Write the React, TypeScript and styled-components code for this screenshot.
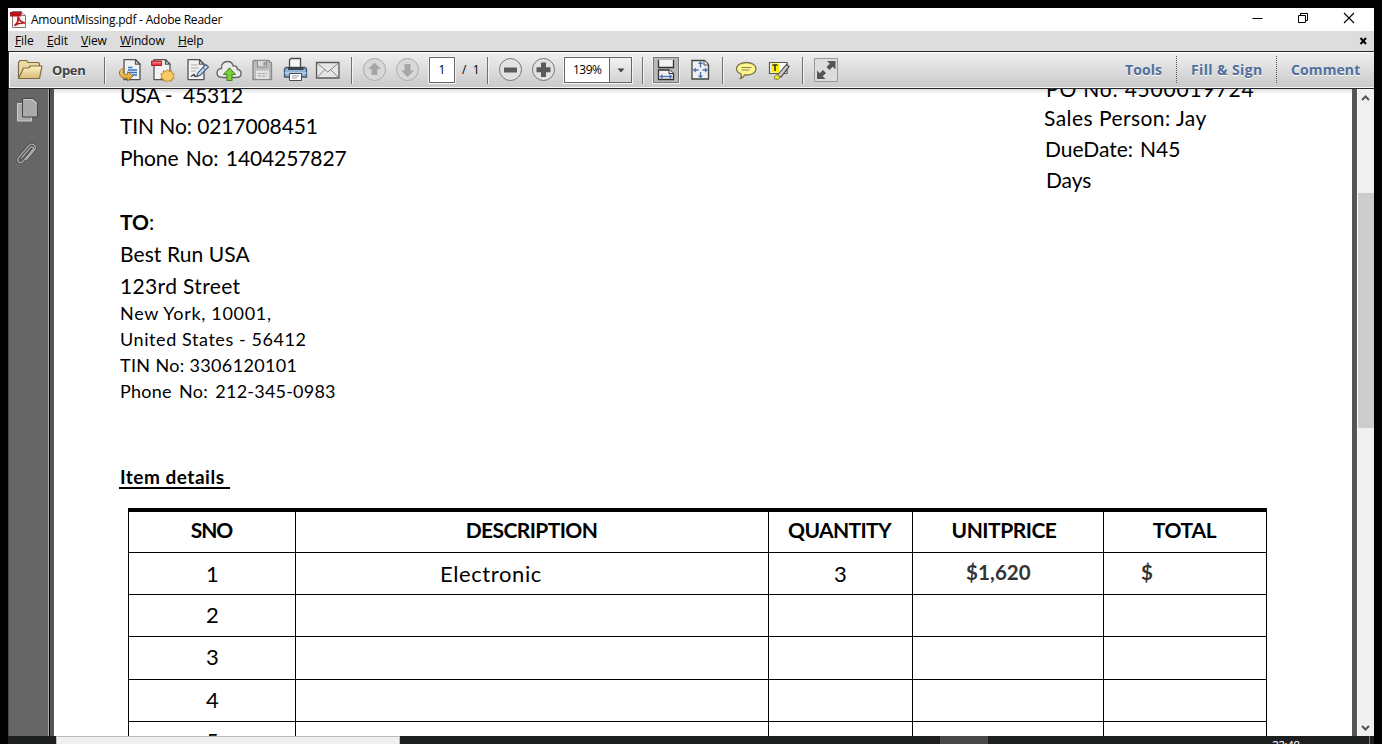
import React from "react";
import styled, { createGlobalStyle } from "styled-components";

const Global = createGlobalStyle`
  * { box-sizing: border-box; }
  html, body { margin: 0; background: #000; overflow: hidden; }
`;

const ui = `"Open Sans", "Noto Sans", sans-serif`;
const doc = `Lato, Carlito, sans-serif`;

const Screen = styled.div`
  width: 1382px;
  height: 744px;
  padding: 8px 8px 0;
  background: #000;
  display: flex;
  flex-direction: column;
  overflow: hidden;
  font-family: ${ui};
  font-size: 12px;
  color: #000;
`;

const TitleBar = styled.header`
  height: 23px;
  background: #fff;
  display: flex;
  align-items: center;
  padding: 0 19px 0 2px;
`;
const Title = styled.span`
  flex: 1;
  margin-left: 4px;
  letter-spacing: -0.22px;
  line-height: 23px;
  white-space: pre;
`;
const WindowButtons = styled.div`
  display: flex;
  gap: 34px;
  margin-bottom: 3px;
  svg { display: block; }
`;

const MenuBar = styled.nav`
  height: 20px;
  background: #dddddd;
  display: flex;
  align-items: center;
  padding: 0 6px 0 7px;
`;
const MenuItem = styled.span<{ $width: number }>`
  width: ${(p) => p.$width}px;
  line-height: 20px;
  letter-spacing: -0.12px;
`;
const CloseDoc = styled.svg`
  margin-left: auto;
`;

const Toolbar = styled.div`
  height: 38px;
  border: 1px solid #262626;
  border-right: 0;
  background: linear-gradient(#efefef, #c9c9c9);
  box-shadow: inset 1px 1px 0 #fff, inset 0 -1px 0 #f6f6f6;
  display: flex;
  align-items: flex-start;
  padding-top: 5px;
  flex: none;
`;
const Icon = styled.svg<{ $gap: number }>`
  display: block;
  flex: none;
  margin-left: ${(p) => p.$gap}px;
`;
const Separator = styled.i<{ $gap: number }>`
  flex: none;
  width: 2px;
  height: 27px;
  margin-left: ${(p) => p.$gap}px;
  border-left: 1px solid #6f6f6f;
  border-right: 1px solid #f3f3f3;
`;
const OpenLabel = styled.b`
  margin-left: 8px;
  width: 36px;
  font-size: 13px;
  letter-spacing: -0.35px;
  line-height: 27px;
  color: #444;
  text-shadow: 0 1px 0 #fff;
`;
const PageField = styled.div`
  width: 26px;
  height: 26px;
  margin-left: 9px;
  border: 1px solid #666;
  background: #fff;
  box-shadow: 0 0 0 1px #f4f4f4;
  text-align: center;
  line-height: 24px;
`;
const PageCount = styled.span`
  margin-left: 7px;
  width: 18px;
  line-height: 26px;
  white-space: pre;
`;
const ZoomField = styled.div`
  display: flex;
  width: 68px;
  height: 26px;
  margin-left: 9px;
  border: 1px solid #666;
  background: #fff;
  box-shadow: 0 0 0 1px #f4f4f4;
`;
const ZoomValue = styled.span`
  width: 45px;
  padding-left: 8px;
  line-height: 24px;
  letter-spacing: -0.5px;
  border-right: 1px solid #666;
`;
const ZoomArrow = styled.span`
  flex: 1;
  display: flex;
  align-items: center;
  justify-content: center;
  background: linear-gradient(#f2f2f2, #d4d4d4);
`;
const PressedButton = styled.div`
  width: 26px;
  height: 26px;
  margin-left: 9px;
  border: 1px solid #777;
  background: #b9b9b9;
  box-shadow: 0 0 0 1px #f0f0f0;
`;
const Panes = styled.div`
  display: flex;
  margin-left: auto;
  margin-top: -1px;
  height: 27px;
`;
const PaneButton = styled.b<{ $width: number; $spacing: number }>`
  width: ${(p) => p.$width}px;
  padding-left: 14px;
  border-left: 1px dotted #555;
  font-size: 14px;
  line-height: 27px;
  letter-spacing: ${(p) => p.$spacing}px;
  color: #4f6f9d;
  text-shadow: 0 1px 0 #fff;
  white-space: nowrap;
  &:first-child { border-left: 0; }
`;

const Body = styled.div`
  height: 647px;
  display: flex;
  background: #555;
`;
const SideBar = styled.aside`
  width: 40px;
  background: #666;
  border-left: 1px solid #4a4a4a;
  padding: 8px 0 0 7px;
`;
const PaneEdge = styled.div`
  width: 6px;
  background: linear-gradient(90deg, #aaa 0 1px, #000 1px 2px, #555 2px);
`;
const Page = styled.main`
  width: 1298px;
  height: 647px;
  padding: 0 0 0 66px;
  background: #fff;
  overflow: hidden;
  font-family: ${doc};
  position: relative;
`;
const PageShade = styled.div`
  position: absolute;
  inset: 0 0 auto 0;
  height: 5px;
  background: linear-gradient(rgba(0, 0, 0, 0.12), transparent);
`;
const Columns = styled.div`
  display: flex;
  height: 315px;
`;
const Addresses = styled.div`
  width: 924px;
  margin-top: -10px;
`;
const Order = styled.div`
  margin-top: -15px;
`;
const Line = styled.div<{ $spacing?: number; $words?: number; $height?: number; $indent?: number }>`
  height: ${(p) => p.$height ?? 32}px;
  line-height: ${(p) => p.$height ?? 32}px;
  margin-left: ${(p) => p.$indent ?? 0}px;
  font-size: 21px;
  letter-spacing: ${(p) => p.$spacing ?? 0}px;
  word-spacing: ${(p) => p.$words ?? 0}px;
  white-space: pre;
`;
const SmallLine = styled(Line)`
  font-size: 18px;
`;
const SmallGroup = styled.div`
  margin-top: -2px;
`;
const Heading = styled.div`
  width: 111px;
  height: 25px;
  margin: 60px 0 0 -1px;
  padding-left: 1px;
  border-bottom: 2px solid #000;
  font-size: 19px;
  font-weight: 700;
  line-height: 25px;
  letter-spacing: 0.5px;
  white-space: pre;
`;
const Table = styled.div`
  width: 1139px;
  margin: 19px 0 0 8px;
  border: solid #000;
  border-width: 4px 1px 0 1px;
`;
const Row = styled.div<{ $height: number }>`
  display: grid;
  grid-template-columns: 167px 473px 144px 191px 162px;
  height: ${(p) => p.$height}px;
  border-bottom: 1px solid #000;
`;
const Cell = styled.div<{ $shift?: number; $back?: number; $spacing?: number; $line?: number }>`
  border-right: 1px solid #000;
  text-align: center;
  font-size: 22px;
  line-height: ${(p) => p.$line ?? 41}px;
  letter-spacing: ${(p) => p.$spacing ?? 0}px;
  padding-left: ${(p) => p.$shift ?? 0}px;
  padding-right: ${(p) => p.$back ?? 0}px;
  &:last-child { border-right: 0; }
`;
const HeadCell = styled(Cell)`
  font-size: 21px;
  font-weight: 700;
  line-height: 35px;
`;
const TextCell = styled(Cell)`
  text-align: left;
`;
const MoneyCell = styled(TextCell)`
  font-size: 20.5px;
  font-weight: 700;
  line-height: 39px;
  color: #333;
`;

const ScrollBar = styled.div`
  width: 17px;
  margin-left: auto;
  background: #f0f0f0;
  display: flex;
  flex-direction: column;
  border-left: 1px solid #fff;
`;
const Thumb = styled.div`
  height: 235px;
  margin: 87px 0 auto;
  background: #cdcdcd;
`;
const TaskBar = styled.footer`
  height: 8px;
  background: #1d1e1e;
  display: flex;
  overflow: hidden;
`;
const SearchBox = styled.div`
  width: 344px;
  margin-left: 48px;
  background: #f0f0f0;
  border: solid #bbb;
  border-width: 1px 1px 0;
`;
const ActiveTask = styled.div`
  width: 48px;
  margin-left: 540px;
  background: #484848;
`;
const Clock = styled.span`
  width: 97px;
  margin-left: 284px;
  padding-top: 1px;
  line-height: 17px;
  letter-spacing: -0.65px;
  color: #fff;
`;
const DesktopEdge = styled.div`
  width: 1px;
  background: #777;
`;

const ink = "#4a4a4a";

const AdobeIcon = () => (
  <svg width="17" height="17" viewBox="0 0 17 17">
    <path d="M2.500.500h9l4 4v12h-13z" fill="#f7f3f3" stroke="#8b7777" />
    <path d="M11.500.500v4h4" fill="#ddd" stroke="#8b7777" />
    <path d="M0 1h11v4.500H0z" fill="#b5141a" />
    <path d="M4.500 14.500c2.500-1.500 4-5 3.500-9 1.500 4.500 3.500 6 7 6.500-4-.5-7.500.5-10.500 2.500z" fill="none" stroke="#b5141a" strokeWidth="1.600" />
  </svg>
);

const menus: [string, number][] = [["File", 32], ["Edit", 34], ["View", 39], ["Window", 58], ["Help", 40]];
const heads: [string, number, number][] = [["SNO", -1, 1], ["DESCRIPTION", -0.6, 1], ["QUANTITY", -0.65, 2], ["UNITPRICE", -0.5, 8], ["TOTAL", -0.3, 1]];
const emptyRows: [string, number, number][] = [["2", 42, 40], ["3", 43, 40], ["4", 42, 39], ["5", 43, 37]];

const Sheet = () => (
  <g stroke="#555" strokeWidth="1.300" strokeLinejoin="round">
    <path d="M3 2.700h11.500l4.500 4.500v15.500H3z" fill="#f2f2f2" />
    <path d="M14.500 2.700v4.500h4.500z" fill="#fff" />
  </g>
);

const clip = "M8 63l9-10.500c1.500-1.600 3.800.2 2.400 2L9.500 66.500c-2.800 2.900-7-.5-4.600-3.600L15.500 50.500c3.300-3.300 8.300.6 5.400 4.500l-8.400 10";

export default function App() {
  return (
    <Screen>
      <Global />
      <TitleBar>
        <AdobeIcon />
        <Title>AmountMissing.pdf - Adobe Reader</Title>
        <WindowButtons>
          <svg width="11" height="12" viewBox="0 0 11 12"><path d="M.500 6.500h10" stroke="#000" /></svg>
          <svg width="12" height="12" viewBox="0 0 12 12" fill="none" stroke="#000"><path d="M1.500 3.500h7v7h-7zM3.500 3.500v-2h7v7h-2" /></svg>
          <svg width="12" height="12" viewBox="0 0 12 12"><path d="M1 1l10 10M11 1L1 11" stroke="#000" strokeWidth="1.100" /></svg>
        </WindowButtons>
      </TitleBar>
      <MenuBar>
        {menus.map(([name, width]) => <MenuItem key={name} $width={width}><u>{name[0]}</u>{name.slice(1)}</MenuItem>)}
        <CloseDoc width="9" height="8" viewBox="0 0 9 8"><path d="M1.500 1l5.500 6M7 1L1.500 7" stroke="#000" strokeWidth="2" /></CloseDoc>
      </MenuBar>

      <Toolbar>
        <Icon $gap={8} width="27" height="26" viewBox="0 0 27 26">
          <defs>
            <linearGradient id="folder" x2="0" y2="1"><stop stopColor="#fff3c6" /><stop offset="1" stopColor="#d8bc72" /></linearGradient>
            <linearGradient id="arrow" x2="0" y2="1"><stop stopColor="#fbdc82" /><stop offset="1" stopColor="#d99a22" /></linearGradient>
          </defs>
          <path d="M1.500 21V5.500l1.500-2h6.500l1.500 2h10.500l1 1.500v4" fill="#ead9a0" stroke="#7e6c45" strokeWidth="1.200" />
          <path d="M1.500 21.500L6.500 11h5l2-2h11.500l-2.500 12.500z" fill="url(#folder)" stroke="#7e6c45" strokeWidth="1.200" strokeLinejoin="round" />
        </Icon>
        <OpenLabel>Open</OpenLabel>
        <Separator $gap={16} />
        {/* convert */}
        <Icon $gap={13} width="25" height="26" viewBox="0 0 25 26">
          <g transform="translate(2 0)"><Sheet /></g>
          <path d="M9 10.500h4.500M9 13h9M9 15.500h9M13 18h5" stroke="#3475c4" strokeWidth="1.300" />
          <path d="M6 11.500C2 11.500-.2 14 .6 17.200c.7 3 3.900 4.600 7.900 4.100V24l5.500-4.700-5.500-4.600v2.600c-2.200.4-4.200-.3-4.500-2-.3-1.500.5-2.900 2-3.800z" fill="url(#arrow)" stroke="#9b6b19" strokeWidth=".9" />
        </Icon>
        {/* create */}
        <Icon $gap={7} width="25" height="26" viewBox="0 0 25 26">
          <Sheet />
          <path d="M.600 4h10v4.500H.600z" fill="#e5383f" stroke="#b01c25" />
          <path d="M1.500 5h8.500v1.300H1.500z" fill="#f58a8a" />
          <path d="M16.500 12.500l1.600 2 2.500-.8.300 2.500 2.400.9-1.300 2 1.300 2.200-2.500.7-.3 2.200-2.400-.7-1.600 1.600-1.600-1.600-2.400.7-.3-2.200-2.500-.7 1.300-2.200-1.300-2 2.400-.9.300-2.500 2.500.8z" fill="#f8ca62" stroke="#b78226" strokeWidth=".9" />
        </Icon>
        {/* edit */}
        <Icon $gap={10} width="25" height="26" viewBox="0 0 25 26">
          <g transform="translate(-1 0)"><Sheet /></g>
          <path d="M5 8h7M5 11h8M5 14h5" stroke="#aaa" strokeWidth="1.200" />
          <path d="M5 19.500l3-2 1 2 3-1" fill="none" stroke="#333" strokeWidth="1.300" />
          <path d="M11 19.500l1-4 8-8 2.500 2.500-8 8z" fill="#c8daf0" stroke="#47607e" strokeWidth="1.100" />
          <path d="M17 10.500l2.500 2.500" stroke="#47607e" />
        </Icon>
        {/* upload */}
        <Icon $gap={5} width="26" height="26" viewBox="0 0 26 26">
          <path d="M7 20.500C2.500 20.500 1 18.500 1 16s2-4.500 4.500-4.500C5 7 8 4.500 11.500 4.500c3 0 5 1.500 5.700 4.500 2.800-.5 4.300 1 4.300 3.500 2.200.3 3.500 1.700 3.500 4s-1.500 4-4.500 4z" fill="#ececec" stroke="#666" strokeWidth="1.400" />
          <path d="M13.500 11l6 6.500H16V23.500h-5V17.500H7.500z" fill="#7ed13c" stroke="#3e8b1c" strokeWidth="1.100" strokeLinejoin="round" />
        </Icon>
        {/* save */}
        <Icon $gap={9} width="24" height="26" viewBox="0 0 24 26">
          <path d="M3 3.500h14.500l3 2.500v16.500H2V4.500z" fill="#bdbdbd" stroke="#8c8c8c" strokeWidth="1.400" />
          <path d="M6.500 3.500h9V10h-9z" fill="#d8d8d8" stroke="#8c8c8c" />
          <path d="M12.500 5h2v3.500h-2z" fill="#8e8e8e" />
          <path d="M5 13.500h13v8.500H5z" fill="#e2e2e2" />
          <path d="M7 16.500h9M7 19h9" stroke="#a5a5a5" strokeDasharray="3 1" />
        </Icon>
        {/* print */}
        <Icon $gap={8} width="26" height="26" viewBox="0 0 26 26">
          <path d="M6.500 11V3l1.500-1.500h9.500V11" fill="#f7f7f7" stroke={ink} strokeWidth="1.300" />
          <path d="M3 10.500h19l1.500 1.500v8H1.500v-8z" fill="#8fb4d8" stroke="#44566b" strokeWidth="1.300" />
          <path d="M5 10h15.500v3H5z" fill="#3c4249" />
          <path d="M1.500 16h22" stroke="#c9dff3" />
          <path d="M6.500 16.500h12v7h-12z" fill="#fff" stroke={ink} />
          <path d="M9 19h7M9 21h5" stroke="#999" />
        </Icon>
        {/* mail */}
        <Icon $gap={6} width="26" height="26" viewBox="0 0 26 26">
          <path d="M1.500 5.500h22.500v15.500H1.500z" fill="#e6e6e6" stroke="#5b5b5b" strokeWidth="1.300" />
          <path d="M2 6l10.800 9L23.500 6M2 20.500l8-8M23.500 20.500l-8-8" fill="none" stroke="#888" />
        </Icon>
        <Separator $gap={10} />
        <Icon $gap={10} width="24" height="26" viewBox="0 0 24 26">
          <circle cx="11.500" cy="12.500" r="11" fill="#d8d8d8" stroke="#aaa" />
          <path d="M11.500 5.500l6.500 6.500h-3.500v6h-6v-6H5z" fill="#a6a6a6" />
        </Icon>
        <Icon $gap={9} width="24" height="26" viewBox="0 0 24 26">
          <circle cx="11.500" cy="12.500" r="11" fill="#d8d8d8" stroke="#aaa" />
          <path d="M11.500 20l6.500-6.500h-3.500V7h-6v6.500H5z" fill="#a6a6a6" />
        </Icon>
        <PageField>1</PageField>
        <PageCount>/  1</PageCount>
        <Separator $gap={7} />
        <Icon $gap={9} width="24" height="26" viewBox="0 0 24 26">
          <circle cx="12.500" cy="12.500" r="11" fill="#e2e2e2" stroke="#777" />
          <path d="M6 10.500h13v5H6z" fill="#5b5b5b" />
        </Icon>
        <Icon $gap={9} width="24" height="26" viewBox="0 0 24 26">
          <circle cx="12.500" cy="12.500" r="11" fill="#e2e2e2" stroke="#777" />
          <path d="M5.500 10.200H10V5.500h5v4.700h4.500v5H15v4.800h-5v-4.800H5.500z" fill="#5b5b5b" />
        </Icon>
        <ZoomField>
          <ZoomValue>139%</ZoomValue>
          <ZoomArrow><svg width="8" height="5" viewBox="0 0 8 5"><path d="M.500.500h7L4 4.500z" fill="#444" /></svg></ZoomArrow>
        </ZoomField>
        <Separator $gap={10} />
        <PressedButton>
          <svg width="24" height="24" viewBox="0 0 24 24">
            <path d="M4.500 2v7.500h15V2" fill="#f1f1f1" stroke="#333" strokeWidth="1.300" />
            <path d="M4.500 21.500v-9.500h10.500l4.500 3.500v6z" fill="#f1f1f1" stroke="#333" strokeWidth="1.300" />
            <path d="M15 12v3.500h4.500" fill="#fff" stroke="#333" />
            <path d="M7 18.500h10" stroke="#4a72b8" strokeWidth="1.300" />
            <path d="M8.500 16v5l-3-2.500zM15.500 16v5l3-2.500z" fill="#4a72b8" />
          </svg>
        </PressedButton>
        <Icon $gap={12} width="20" height="26" viewBox="0 0 20 26">
          <path d="M1 3.500h12.500l4 4V22H1z" fill="#efefef" stroke="#444" strokeWidth="1.300" />
          <path d="M13 3.500V8h4.500" fill="#fff" stroke="#444" />
          <path d="M9.500 6v4.500M9.500 15v5M3 13h4.500M11.500 13H16" stroke="#4a72b8" strokeWidth="1.300" />
          <path d="M9.500 4l2.500 3h-5zM9.500 21.500l2.500-3h-5zM1.800 13l3-2.500v5zM17 13l-3-2.500v5z" fill="#4a72b8" />
        </Icon>
        <Separator $gap={11} />
        <Icon $gap={11} width="23" height="26" viewBox="0 0 23 26">
          <path d="M11.500 5.500c5.500 0 9.500 2.500 9.500 6.300S17 18 12 18c-1 0-1.500 0-2.300-.1C8.500 20 7 21.300 5.500 21.500c.8-1.300 1-2.500.7-4.300C3.300 16 1.500 14.200 1.500 11.800 1.500 8 6 5.500 11.500 5.500z" fill="#fdf68e" stroke="#7a7550" strokeWidth="1.300" />
          <path d="M6.500 10.500h10M6.500 13h8" stroke="#8c855a" strokeWidth="1.200" />
        </Icon>
        <Icon $gap={10} width="24" height="26" viewBox="0 0 24 26">
          <path d="M1.500 5.500h17.500v11H1.500z" fill="#fff" stroke="#555" strokeWidth="1.200" />
          <path d="M3 6.500h8v9H3z" fill="#fff200" />
          <path d="M4.500 8h5M7 8v6" stroke="#333" strokeWidth="1.600" />
          <path d="M9 18.500l9.500-11 2.500 2-8 10.500z" fill="#c9c9c9" stroke="#444" strokeWidth="1.100" />
          <path d="M6.500 19.500l2.500-2 3 2.500-2 2.500-3.500-.5z" fill="#f4e82e" stroke="#8d8530" />
        </Icon>
        <Separator $gap={10} />
        <Icon $gap={10} width="25" height="26" viewBox="0 0 25 26">
          <path d="M.500 1.500h23v23H.500z" fill="#ddd" stroke="#999" />
          <path d="M21.500 4v8.500l-2.700-2.700-3.300 3.300-3-3 3.300-3.300L13 4zM3 22v-8.500l2.700 2.700L9 12.900l3 3-3.300 3.300L11.500 22z" fill="#555" />
        </Icon>
        <Panes>
          <PaneButton $width={65} $spacing={0.1}>Tools</PaneButton>
          <PaneButton $width={100} $spacing={0.38}>Fill &amp; Sign</PaneButton>
          <PaneButton $width={98} $spacing={0.1}>Comment</PaneButton>
        </Panes>
      </Toolbar>

      <Body>
        <SideBar>
          <svg width="24" height="72" viewBox="0 0 24 72">
            <path d="M1.500 6.500h14v17.500h-14z" fill="#aaa" stroke="#ccc" />
            <path d="M6.500 1.500H17l4.500 4V20h-15z" fill="#aaa" stroke="#444" />
            <path d="M7.500 2.500H16l4.500 4" fill="none" stroke="#d2d2d2" />
            <g transform="translate(-2.500 -2)" fill="none">
              <path d={clip} stroke="#444" strokeWidth="2.800" />
              <path d={clip} stroke="#aaa" strokeWidth="1.400" />
            </g>
          </svg>
        </SideBar>
        <PaneEdge />
        <Page>
          <PageShade />
          <Columns>
            <Addresses>
              <Line $height={31} $spacing={-0.15}>USA -  45312</Line>
              <Line $spacing={-0.1}>TIN No: 0217008451</Line>
              <Line $spacing={-0.1} $words={2.100}>Phone No: 1404257827</Line>
              <Line />
              <Line $spacing={0}><b>TO</b>:</Line>
              <Line $spacing={0.08}>Best Run USA</Line>
              <Line $spacing={0.35}>123rd Street</Line>
              <SmallGroup>
                <SmallLine $height={26} $spacing={0.69}>New York, 10001,</SmallLine>
                <SmallLine $height={26} $spacing={0.58}>United States - 56412</SmallLine>
                <SmallLine $height={26} $spacing={0.34}>TIN No: 3306120101</SmallLine>
                <SmallLine $height={26} $spacing={0.22} $words={2.600}>Phone No: 212-345-0983</SmallLine>
              </SmallGroup>
            </Addresses>
            <Order>
              <Line $height={29} $spacing={0.8} $indent={2}>PO No: 4500019724</Line>
              <Line $height={29} $spacing={0.45}>Sales Person: Jay</Line>
              <Line $height={33} $spacing={0} $words={1.500} $indent={1}>DueDate: N45</Line>
              <Line $height={29} $spacing={-0.1} $indent={2}>Days</Line>
            </Order>
          </Columns>
          <Heading>Item details </Heading>
          <Table>
            <Row $height={41}>
              {heads.map(([name, spacing, back]) => <HeadCell key={name} $spacing={spacing} $back={back}>{name}</HeadCell>)}
            </Row>
            <Row $height={42}>
              <Cell $shift={1}>1</Cell>
              <TextCell $shift={144} $spacing={0.6}>Electronic</TextCell>
              <Cell>3</Cell>
              <MoneyCell $shift={53} $spacing={0.1}>$1,620</MoneyCell>
              <MoneyCell $shift={37}>$</MoneyCell>
            </Row>
            {emptyRows.map(([n, height, line]) => (
              <Row key={n} $height={height}>
                <Cell $shift={1} $line={line}>{n}</Cell><Cell /><Cell /><Cell /><Cell />
              </Row>
            ))}
          </Table>
        </Page>
        <ScrollBar>
          <svg width="16" height="17" viewBox="0 0 16 17"><path d="M4 11l3.500-3.500L11 11" fill="none" stroke="#555" strokeWidth="2" /></svg>
          <Thumb />
          <svg width="16" height="17" viewBox="0 0 16 17"><path d="M4 7l3.500 3.500L11 7" fill="none" stroke="#555" strokeWidth="2" /></svg>
        </ScrollBar>
      </Body>
      <TaskBar>
        <SearchBox />
        <ActiveTask />
        <Clock>22:48</Clock>
        <DesktopEdge />
      </TaskBar>
    </Screen>
  );
}
